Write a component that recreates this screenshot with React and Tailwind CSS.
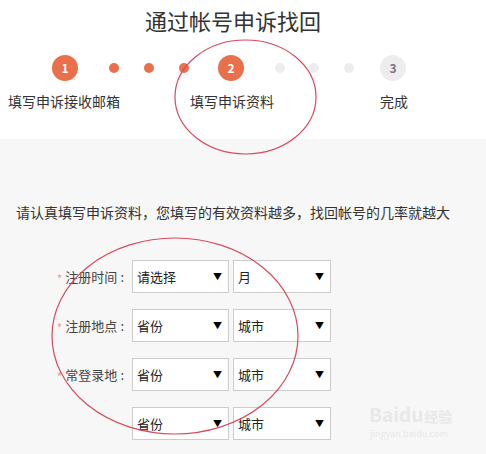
import React from 'react';

const font = { fontFamily: '"Noto Sans CJK SC", "Liberation Sans", sans-serif' };

const Select = ({ value, width = 'w-[97px]' }) => (
  <div className={`${width} h-[33px] bg-white border border-[#cccccc] flex items-center justify-between pl-[4px] pr-[6px]`}>
    <span className="text-[13px] text-[#222]">{value}</span>
    <span className="text-[9px] text-black leading-none">▼</span>
  </div>
);

const FormRow = ({ label, required, left, right }) => (
  <div className="flex items-center h-[33px]">
    <div className="w-[132px] flex items-center justify-end pr-[8px]">
      {required && <span className="text-[#e9a486] text-[12px] mr-[3px] mt-[4px]">*</span>}
      {label && (
        <span className="text-[13px] text-[#444]">
          {label}
          <span className="ml-[3px]">:</span>
        </span>
      )}
    </div>
    <Select value={left} />
    <div className="ml-[4px]">
      <Select value={right} width="w-[98px]" />
    </div>
  </div>
);

const App = () => {
  return (
    <div className="relative w-[486px] h-[454px] overflow-hidden bg-[#f7f7f7]" style={font}>
      <div className="bg-white h-[139px]">
        <h1 className="pt-[6px] text-center text-[22px] leading-[28px] text-[#333] pr-[20px]">通过帐号申诉找回</h1>

        <div className="flex items-center mt-[21px] pl-[52px]">
          <div className="w-[26px] h-[26px] rounded-full bg-[#e9704b] text-white text-[12px] font-bold flex items-center justify-center">1</div>
          <div className="ml-[31px] w-[10px] h-[10px] rounded-full bg-[#e9704b]" />
          <div className="ml-[25px] w-[10px] h-[10px] rounded-full bg-[#e9704b]" />
          <div className="ml-[25px] w-[10px] h-[10px] rounded-full bg-[#e9704b]" />
          <div className="ml-[29px] w-[26px] h-[26px] rounded-full bg-[#e9704b] text-white text-[12px] font-bold flex items-center justify-center">2</div>
          <div className="ml-[31px] w-[10px] h-[10px] rounded-full bg-[#ededf0]" />
          <div className="ml-[24px] w-[10px] h-[10px] rounded-full bg-[#ededf0]" />
          <div className="ml-[25px] w-[10px] h-[10px] rounded-full bg-[#ededf0]" />
          <div className="ml-[26px] w-[26px] h-[26px] rounded-full bg-[#ededf0] text-[#777] text-[12px] font-bold flex items-center justify-center">3</div>
        </div>

        <div className="flex items-center mt-[9px] text-[14px] leading-[22px] text-[#333]">
          <span className="ml-[8px]">填写申诉接收邮箱</span>
          <span className="ml-[70px]">填写申诉资料</span>
          <span className="ml-[106px]">完成</span>
        </div>
      </div>

      <p className="mt-[62px] ml-[16px] text-[14px] leading-[22px] text-[#333]">
        请认真填写申诉资料，您填写的有效资料越多，找回帐号的几率就越大
      </p>

      <div className="mt-[37px] flex flex-col gap-[16px]">
        <FormRow label="注册时间" required left="请选择" right="月" />
        <FormRow label="注册地点" required left="省份" right="城市" />
        <FormRow label="常登录地" required left="省份" right="城市" />
        <FormRow label="" left="省份" right="城市" />
      </div>

      <div className="absolute left-[369px] top-[404px] text-[#e8e8e8] select-none whitespace-nowrap">
        <div className="text-[19px] font-bold leading-[20px]">
          Baidu<span className="text-[14px] ml-[1px]">经验</span>
        </div>
        <div className="text-[9px] leading-[10px] mt-[3px] ml-[1px]">jingyan.baidu.com</div>
      </div>

      <svg className="absolute inset-0 pointer-events-none" width="486" height="454">
        <ellipse cx="245.5" cy="97" rx="70.5" ry="57" fill="none" stroke="#d94a5c" strokeWidth="1.2" />
        <ellipse cx="175" cy="336" rx="123" ry="98" fill="none" stroke="#d94a5c" strokeWidth="1.2" />
      </svg>
    </div>
  );
};

export default App;
